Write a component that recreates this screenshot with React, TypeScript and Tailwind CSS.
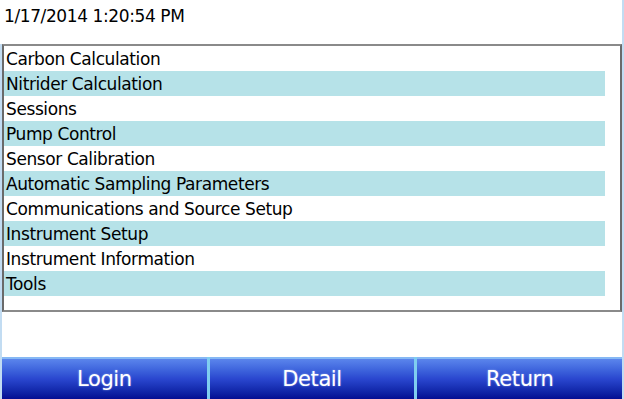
import React from "react";

const items = [
  "Carbon Calculation",
  "Nitrider Calculation",
  "Sessions",
  "Pump Control",
  "Sensor Calibration",
  "Automatic Sampling Parameters",
  "Communications and Source Setup",
  "Instrument Setup",
  "Instrument Information",
  "Tools",
];

const font = { fontFamily: "'DejaVu Sans', 'Noto Sans', sans-serif" };

export default function App() {
  return (
    <div
      className="w-[624px] h-[399px] bg-white flex flex-col overflow-hidden border-r-2 border-[#c2dcf2]"
      style={font}
    >
      <div className="h-[44px] pl-[4px] pt-[5px] text-[17px] leading-[22px] text-black tracking-[-0.4px]">
        1/17/2014 1:20:54 PM
      </div>
      <div className="flex-1 flex flex-col border-l-2 border-[#c2dcf2]">
        <div className="h-[268px] border-2 border-t-[#8a8a8a] border-l-[#6a6a6a] border-b-[#8a8a8a] border-r-[#6a6a6a] pr-[15px]">
          {items.map((it, i) => (
            <div
              key={it}
              className={`h-[25px] pl-[2px] pt-[2px] text-[17px] leading-[23px] text-black tracking-[-0.4px] ${
                i % 2 === 1 ? "bg-[#b6e2e8]" : ""
              }`}
            >
              {it}
            </div>
          ))}
        </div>
        <div className="flex-1" />
        <div className="h-[42px] flex gap-[3px] bg-[#7fcdf0]">
          {["Login", "Detail", "Return"].map((b) => (
            <div
              key={b}
              className="flex-1 flex items-center justify-center pt-[2px] border-t-2 border-[#86b8f4] bg-gradient-to-b from-[#5b85ec] via-[#2a46cf] to-[#060c92] text-white text-[21px] tracking-[-0.4px] [text-shadow:0_0_2px_rgba(200,220,255,0.6)]"
            >
              {b}
            </div>
          ))}
        </div>
      </div>
    </div>
  );
}
